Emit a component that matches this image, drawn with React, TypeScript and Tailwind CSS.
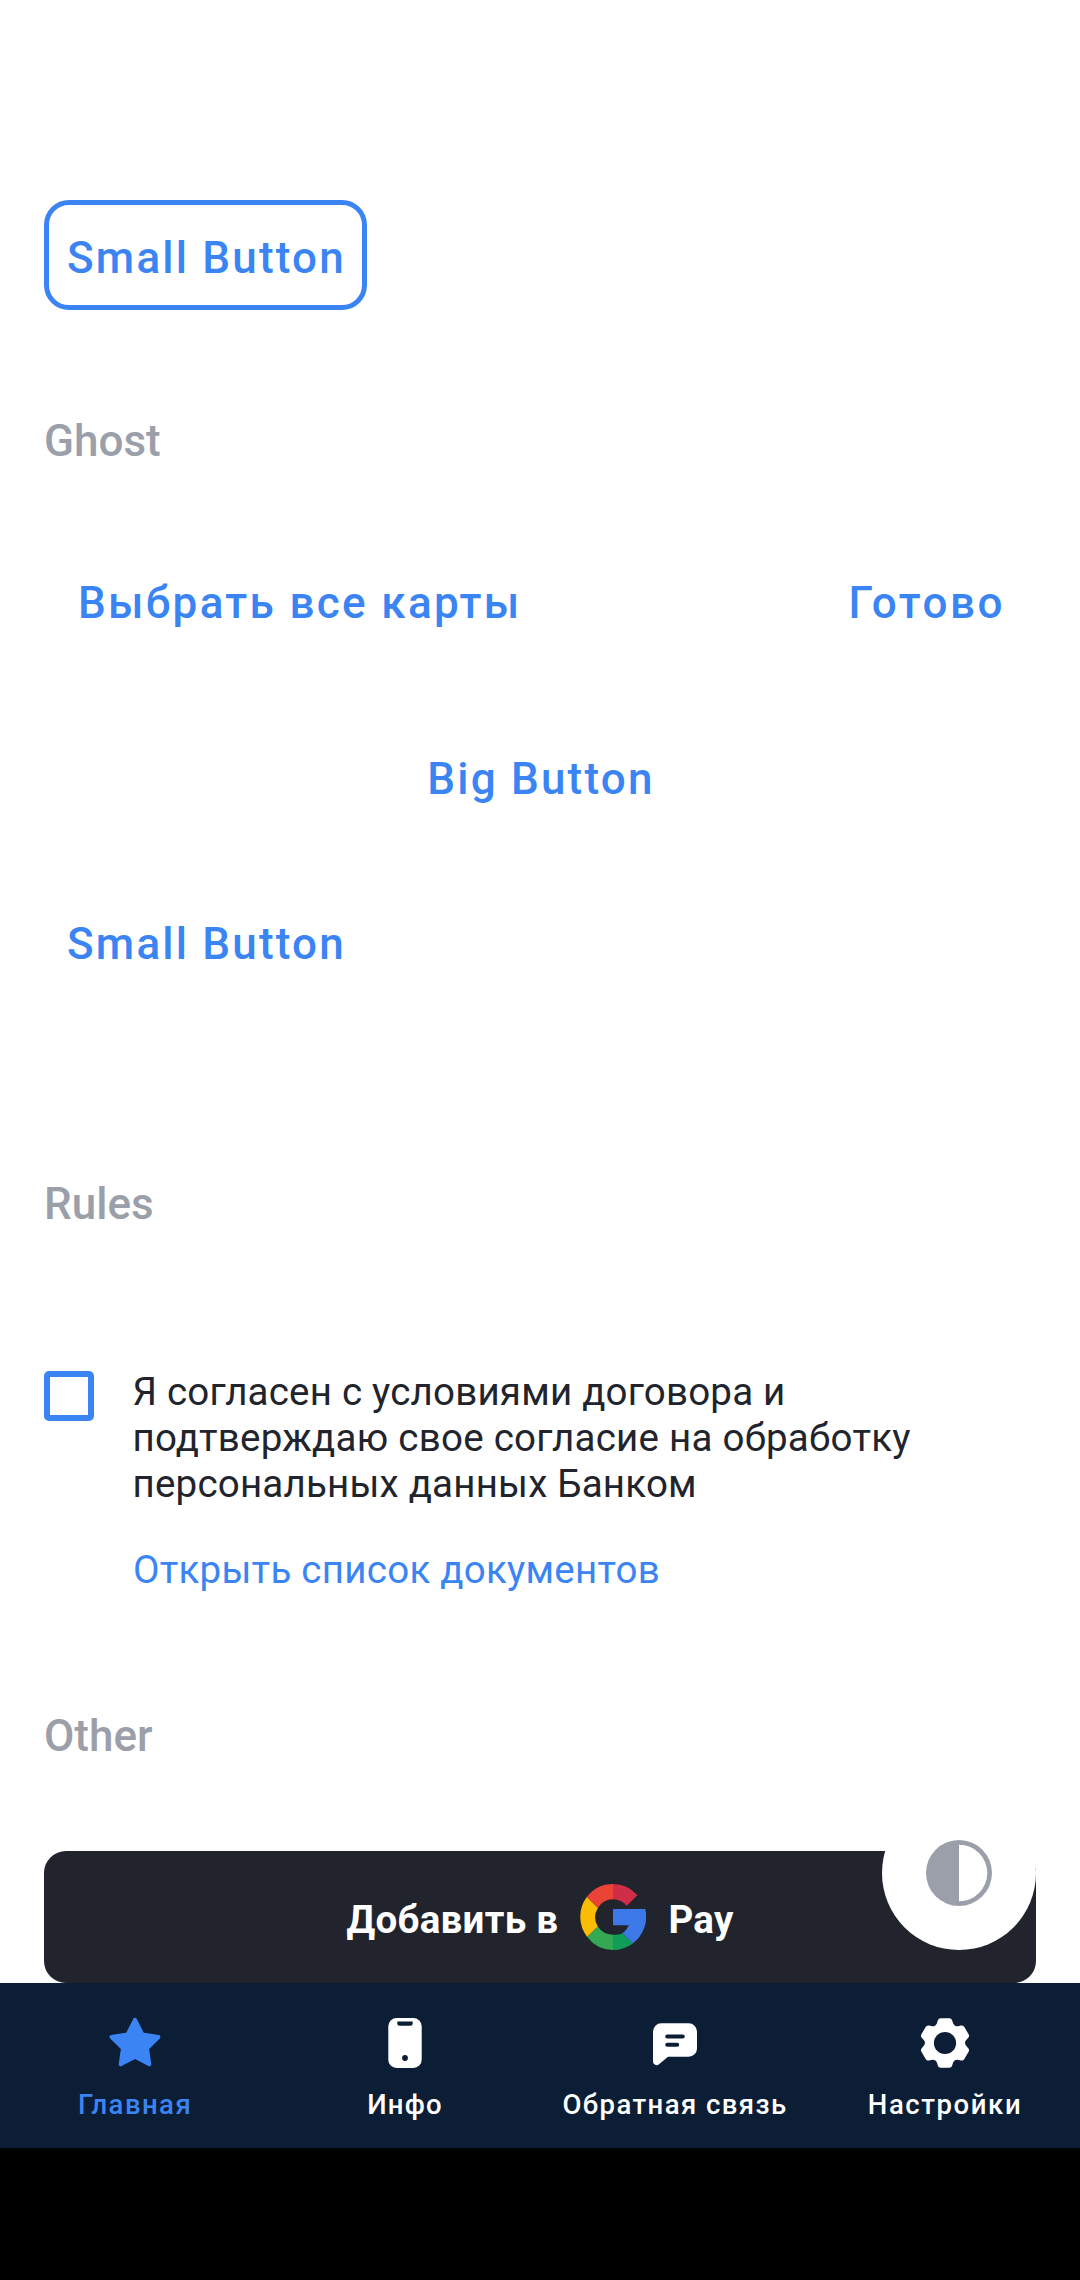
import React from "react";

function SectionTitle({ children }: { children: React.ReactNode }) {
  return (
    <h2 className="text-[44px] leading-[52px] font-medium text-[#9b9faa]">{children}</h2>
  );
}

function GoogleMark() {
  return (
    <svg viewBox="0 0 66 66" className="size-[66px] shrink-0">
      <path fill="#EB4335" d="M33 0A33 33 0 0 0 6.8 13L17.9 23.9A17.7 17.7 0 0 1 33 15.3Z" />
      <path fill="#D02D48" d="M33 0A33 33 0 0 1 57.4 11.2L46.7 21.8A17.7 17.7 0 0 0 33 15.3Z" />
      <path fill="#FBBC04" d="M6.8 13A33 33 0 0 0 7.2 53L17.9 42.6A17.7 17.7 0 0 1 17.9 23.9Z" />
      <path fill="#34A853" d="M7.2 53A33 33 0 0 0 33 66V50.7A17.7 17.7 0 0 1 17.9 42.6Z" />
      <path fill="#109D58" d="M33 66A33 33 0 0 0 52.8 59.4L42.5 49.2A17.7 17.7 0 0 1 33 50.7Z" />
      <path fill="#3C78E8" d="M33 25H65.2A33 33 0 0 1 52.8 59.4L42.5 49.2A17.7 17.7 0 0 0 48.8 41.3H33Z" />
    </svg>
  );
}

function ContrastIcon() {
  return (
    <svg viewBox="0 0 66 66" className="size-[66px]">
      <circle cx="33" cy="33" r="33" fill="#9b9faa" />
      <path d="M33 4.7A28.3 28.3 0 0 1 33 61.3Z" fill="#fff" />
    </svg>
  );
}

function StarIcon() {
  return (
    <svg viewBox="0 0 66 66" className="size-[66px]">
      <path
        d="M33 9.8L40.4 24.4L56.4 27L45 38.2L47.3 54.3L33 46.8L18.7 54.3L21 38.2L9.6 27L25.6 24.4Z"
        fill="currentColor"
        stroke="currentColor"
        strokeWidth="4"
        strokeLinejoin="round"
      />
    </svg>
  );
}

function PhoneIcon() {
  return (
    <svg viewBox="0 0 66 66" className="size-[66px]">
      <rect x="16.3" y="8" width="33.4" height="50" rx="8.3" fill="currentColor" />
      <path d="M25.3 11.6H40.7V13.2A2.5 2.5 0 0 1 38.2 15.7H27.8A2.5 2.5 0 0 1 25.3 13.2Z" fill="#0c1d36" />
      <circle cx="33" cy="48" r="2.9" fill="#0c1d36" />
    </svg>
  );
}

function ChatIcon() {
  return (
    <svg viewBox="0 0 66 66" className="size-[66px]">
      <path
        d="M19.3 13.3H46.7A8.3 8.3 0 0 1 55 21.6V38.4A8.3 8.3 0 0 1 46.7 46.7H26L17 54.3C14.5 56.2 11 54.8 11 51.6V21.6A8.3 8.3 0 0 1 19.3 13.3Z"
        fill="currentColor"
      />
      <path d="M25.2 26.5H40.8M25.2 34.8H35.2" stroke="#0c1d36" strokeWidth="4" strokeLinecap="round" />
    </svg>
  );
}

const polar = (radius: number, degrees: number) => {
  const a = (degrees * Math.PI) / 180;
  return `${(33 + radius * Math.sin(a)).toFixed(2)} ${(33 - radius * Math.cos(a)).toFixed(2)}`;
};

const gearPath =
  `M${polar(22.2, -11)}` +
  [0, 60, 120, 180, 240, 300]
    .map((t) => `L${polar(22.2, t + 11)}Q${polar(13, t + 30)} ${polar(22.2, t + 49)}`)
    .join("") +
  "Z";

function GearIcon() {
  return (
    <svg viewBox="0 0 66 66" className="size-[66px]">
      <path d={gearPath} fill="currentColor" stroke="currentColor" strokeWidth="6" strokeLinejoin="round" />
      <circle cx="33" cy="33" r="11.1" fill="#0c1d36" />
    </svg>
  );
}

const tabs = [
  { label: "Главная", Icon: StarIcon, style: "text-[#3b84f4] tracking-[1.45px]" },
  { label: "Инфо", Icon: PhoneIcon, style: "text-white tracking-[1.2px]" },
  { label: "Обратная связь", Icon: ChatIcon, style: "text-white tracking-[1.44px]" },
  { label: "Настройки", Icon: GearIcon, style: "text-white tracking-[1.6px]" },
];

export default function App() {
  return (
    <div className="relative flex h-[2280px] w-[1080px] flex-col overflow-hidden bg-white font-['Roboto',sans-serif]">
      <main className="flex h-[1983px] shrink-0 flex-col px-[44px] pt-[200px] text-[44px] leading-[52px]">
        <button className="flex h-[110px] w-[323px] items-center justify-center rounded-[25px] border-[5px] border-[#3b84f4] pt-[6px] pl-[2px] font-medium tracking-[2.2px] whitespace-nowrap text-[#3b84f4]">
          Small Button
        </button>

        <div className="mt-[105px]">
          <SectionTitle>Ghost</SectionTitle>
        </div>
        <div className="mt-[78px] flex h-[110px] items-center justify-between pt-[6px] pr-[31px] pl-[34px] font-medium text-[#3b84f4]">
          <button className="tracking-[2.34px]">Выбрать все карты</button>
          <button className="tracking-[2.56px]">Готово</button>
        </div>
        <button className="mt-[55px] flex h-[132px] items-center justify-center pt-[6px] pl-[2px] font-medium tracking-[2.2px] text-[#3b84f4]">
          Big Button
        </button>
        <button className="mt-[44px] flex h-[110px] w-[323px] items-center justify-center pt-[6px] pl-[2px] font-medium tracking-[2.2px] whitespace-nowrap text-[#3b84f4]">
          Small Button
        </button>

        <div className="mt-[182px]">
          <SectionTitle>Rules</SectionTitle>
        </div>
        <div className="mt-[139px] flex gap-[38.5px] text-[38.5px] leading-[46px] tracking-[0.26px]">
          <span className="mt-[2px] size-[50px] shrink-0 rounded-[5px] border-[6px] border-[#3b84f4]" />
          <div>
            <p className="text-[#21242d]">
              <span className="tracking-[0.21px]">Я согласен с условиями договора и</span>
              <br />
              подтверждаю свое согласие на обработку
              <br />
              <span className="tracking-[0.21px]">персональных данных Банком</span>
            </p>
            <a className="mt-[40px] block pl-[0.5px] text-[#3b84f4]">Открыть список документов</a>
          </div>
        </div>

        <div className="mt-[117px]">
          <SectionTitle>Other</SectionTitle>
        </div>
        <button className="mt-[89px] flex h-[132px] shrink-0 items-center justify-center gap-[22px] rounded-[22px] bg-[#21242d] text-[38.5px] leading-[46px] font-bold tracking-[0.3px] text-white">
          <span className="pt-[6px]">Добавить в</span>
          <GoogleMark />
          <span className="pt-[6px]">Pay</span>
        </button>
      </main>

      <nav className="grid h-[165px] shrink-0 grid-cols-4 bg-[#0c1d36] text-[27.5px] leading-[32px] font-medium">
        {tabs.map(({ label, Icon, style }) => (
          <a key={label} className={`flex flex-col items-center pt-[27px] whitespace-nowrap ${style}`}>
            <Icon />
            <span className="mt-[13px]">{label}</span>
          </a>
        ))}
      </nav>
      <div className="flex-1 bg-black" />

      <button className="absolute top-[1796px] right-[44px] flex size-[154px] items-center justify-center rounded-full bg-white">
        <ContrastIcon />
      </button>
    </div>
  );
}
